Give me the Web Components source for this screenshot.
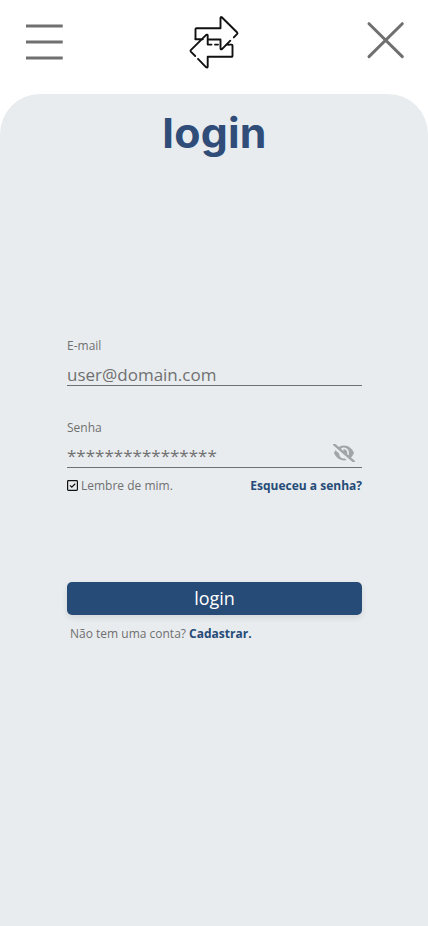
<!DOCTYPE html>
<html lang="pt-BR">
<head>
<meta charset="utf-8">
<title>Login</title>
<style>
html,body{margin:0;height:100%}
body{background:#fff;font-family:"Open Sans","Noto Sans",sans-serif;color:#707070}
</style>
</head>
<body>
<login-page></login-page>
<script>
const define = (name, html, setup) => customElements.define(name, class extends HTMLElement {
  constructor() {
    super();
    this.attachShadow({ mode: 'open' }).innerHTML = html;
    if (setup) setup(this, this.shadowRoot);
  }
});

define('swap-logo', `
<style>:host{display:block;width:70px;height:70px}svg{display:block}</style>
<svg width="70" height="70" viewBox="0 0.3 70 70" fill="none" stroke="#111" stroke-width="1.9" stroke-linecap="round" stroke-linejoin="round">
<path d="M15.5 31.4V21.5Q15.5 20.6 16.4 20.6H40.5V10.2Q40.8 8.8 41.8 9.6L57.2 24.8Q57.8 25.5 57.2 26.2L53.8 29.7M50.3 33L42 41.4Q40.7 42.2 40.5 40.8V31.8H28.8"/>
<path d="M15.5 31.6H22.8M28 36.9H31.5M35 36.9H38M48.8 36.9H51.6Q52.5 36.9 52.5 37.8V48.2Q52.5 49.1 51.6 49.1H27.7V59Q27.3 60.3 26.2 59.6L18 51.2M15.2 48.3L10.8 43.9Q10.2 43.2 10.8 42.5L26.2 27.2Q27.5 26.5 27.7 27.8V36.9"/>
<path d="M46.6 36.9H48.8"/>
</svg>`);

define('app-bar', `
<style>
:host{display:flex;justify-content:space-between;height:94px;box-sizing:border-box;padding:8px 22px 0 26px}
svg{display:block}.menu{margin-top:16px}.close{margin-top:12px}
swap-logo{margin-left:1px}
</style>
<svg class="menu" width="37" height="36" stroke="#707070" stroke-width="3"><path d="M0 2H36.7M0 18H36.7M0 34H36.7"/></svg>
<swap-logo></swap-logo>
<svg class="close" width="40" height="40" stroke="#707070" stroke-width="3" stroke-linecap="round"><path d="M3 3.7L36.3 36.6M36.3 3.7L3 36.6"/></svg>`);

define('form-field', `
<style>
:host{display:block;height:58px;box-sizing:border-box}
.label{font-size:12px;line-height:16px;height:16px}
.row{display:flex;justify-content:space-between;box-sizing:border-box;height:32px;padding-top:var(--value-top,6px);border-bottom:1px solid #707070;line-height:30px;font-size:17px;white-space:nowrap}
</style>
<div class="label"></div><div class="row"><span><slot></slot></span><slot name="icon"></slot></div>`,
(host, root) => { root.querySelector('.label').textContent = host.getAttribute('label'); });

define('eye-off', `
<style>:host{display:block;width:22px;height:18px;margin:3px 7px 0 0}svg{display:block}</style>
<svg width="22" height="18" viewBox="0 0 640 512" preserveAspectRatio="none" fill="#a2a5a8"><g transform="translate(0 -25.600) scale(1 1.1)"><path d="M320 400c-75.850 0-137.250-58.710-142.900-133.110L72.200 185.820c-13.790 17.300-26.480 35.590-36.720 55.590a32.350 32.350 0 0 0 0 29.190C89.710 376.410 197.070 448 320 448c26.910 0 52.870-4 77.890-10.460L346 397.390a144.130 144.130 0 0 1-26 2.610zm313.820 58.100l-110.550-85.440a331.250 331.250 0 0 0 81.250-102.070 32.350 32.350 0 0 0 0-29.190C550.290 135.590 442.930 64 320 64a308.150 308.150 0 0 0-147.320 37.700L45.460 3.370A16 16 0 0 0 23 6.180L3.370 31.450A16 16 0 0 0 6.180 53.900l588.360 454.730a16 16 0 0 0 22.460-2.810l19.640-25.270a16 16 0 0 0-2.820-22.450zM450.190 316.500l-39.300-30.370A94.750 94.750 0 0 0 416 256a94.760 94.760 0 0 0-121.310-92.210A47.650 47.650 0 0 1 304 192a46.640 46.640 0 0 1-1.540 10l-73.610-56.890A142.310 142.310 0 0 1 320 112a143.920 143.920 0 0 1 144 144c0 21.630-5.290 41.790-13.810 60.500z"/></g></svg>`);

define('check-option', `
<style>:host{display:flex;align-items:center;gap:3px}svg{display:block;position:relative;top:-1px}</style>
<svg width="11" height="11" fill="none" stroke="#111"><rect x=".6" y=".6" width="9.8" height="9.8" rx=".8" stroke-width="1.2"/><path d="M3 5.4L4.8 7.2L8.2 3.8" stroke-width="1.25"/></svg>
<span><slot></slot></span>`);

define('primary-button', `
<style>:host{display:block}
button{display:block;width:100%;height:33px;border:0;border-radius:5px;padding:0;background:#264b77;color:#fff;font:18px/33px "Open Sans","Noto Sans",sans-serif;box-shadow:0 3px 6px rgba(0,0,0,.09)}</style>
<button type="button"><slot></slot></button>`);

define('login-page', `
<style>
:host{display:block;height:926px;overflow:hidden}
main{height:832px;box-sizing:border-box;background:#e8ecef;border-radius:40px 40px 0 0;padding:12px 66px 0 67px}
h1{margin:0;text-align:center;font:700 41px/54px Inter,sans-serif;letter-spacing:.2px;color:#304c78;height:54px;transform:scaleX(1.045)}
.fields{display:grid;gap:24px;margin-top:178px}
.pw{--value-top:5px}
.options{display:flex;justify-content:space-between;font-size:12px;line-height:16px}
b{color:#264b77}
primary-button{margin-top:88px}
.signup{margin:11px 0 0 3px;font-size:12px;line-height:16px;white-space:nowrap}
</style>
<app-bar></app-bar>
<main>
<h1>login</h1>
<div class="fields">
<form-field label="E-mail">user@domain.com</form-field>
<form-field label="Senha" class="pw">****************<eye-off slot="icon"></eye-off></form-field>
</div>
<div class="options"><check-option>Lembre de mim.</check-option><b>Esqueceu a senha?</b></div>
<primary-button>login</primary-button>
<div class="signup">Não tem uma conta? <b>Cadastrar.</b></div>
</main>`);
</script>
</body>
</html>
